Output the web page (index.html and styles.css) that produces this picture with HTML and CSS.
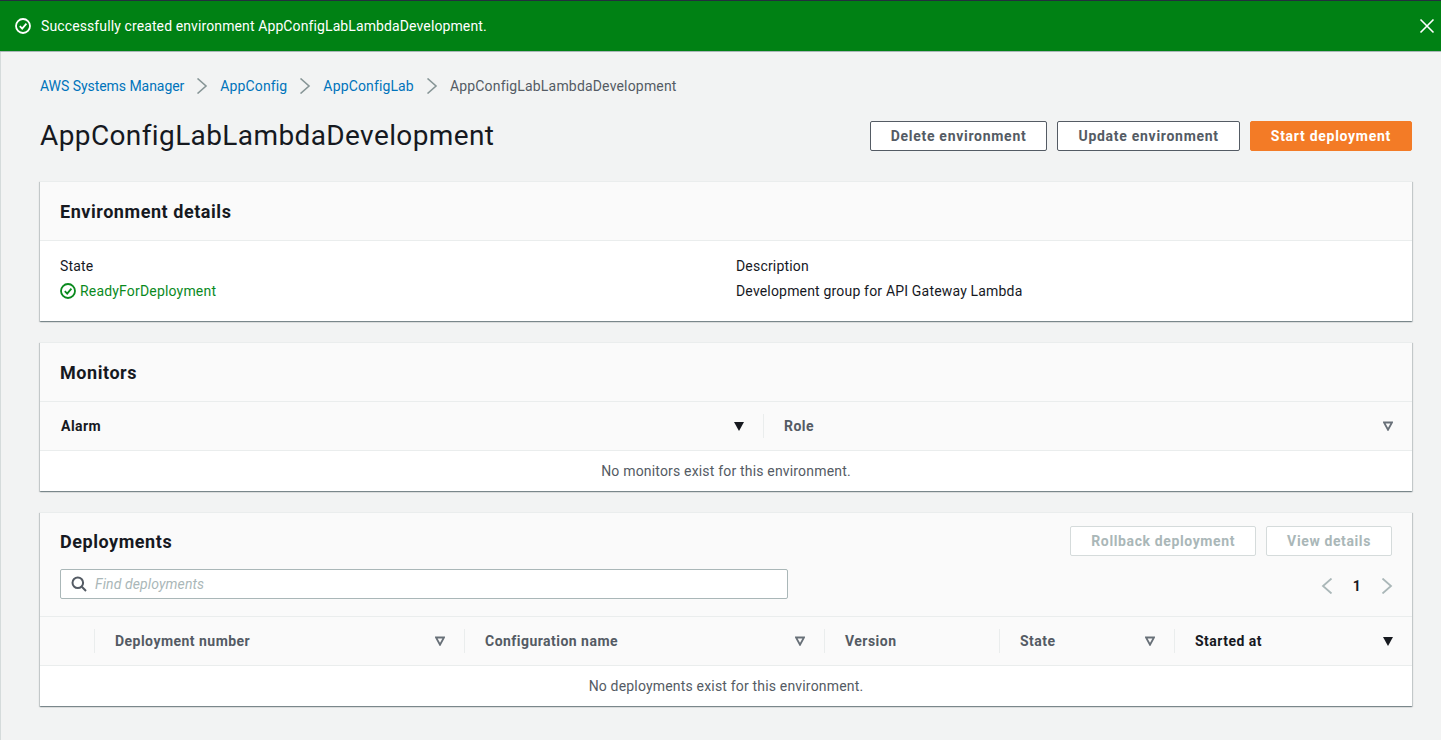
FILE: index.html
```html
<!DOCTYPE html>
<html lang="en">
<head>
  <meta charset="UTF-8" />
  <meta name="viewport" content="width=device-width,initial-scale=1.0" />
  <title>AppConfigLabLambdaDevelopment</title>
  <link rel="stylesheet" href="styles.css">
</head>
<body>
  <div class="flash">
    <svg class="flash-icon" viewBox="0 0 16 16" width="16" height="16"><circle cx="8" cy="8" r="7"/><path d="M4.8 8.2 7.2 10.6 11.4 5.6"/></svg>
    <span class="flash-text">Successfully created environment AppConfigLabLambdaDevelopment.</span>
    <svg class="flash-close" viewBox="0 0 16 16" width="16" height="16"><path d="M1.5 1.5 14.5 14.5M14.5 1.5 1.5 14.5"/></svg>
  </div>

  <main class="content">
    <nav class="crumbs">
      <a href="#">AWS Systems Manager</a>
      <svg class="chev" viewBox="0 0 16 16" width="16" height="16"><path d="M3.5 .5 12 8 3.5 15.5"/></svg>
      <a href="#">AppConfig</a>
      <svg class="chev" viewBox="0 0 16 16" width="16" height="16"><path d="M3.5 .5 12 8 3.5 15.5"/></svg>
      <a href="#">AppConfigLab</a>
      <svg class="chev" viewBox="0 0 16 16" width="16" height="16"><path d="M3.5 .5 12 8 3.5 15.5"/></svg>
      <span class="crumb-current">AppConfigLabLambdaDevelopment</span>
    </nav>

    <div class="page-head">
      <h1>AppConfigLabLambdaDevelopment</h1>
      <div class="actions">
        <button class="btn" type="button">Delete environment</button>
        <button class="btn" type="button">Update environment</button>
        <button class="btn btn-primary" type="button">Start deployment</button>
      </div>
    </div>

    <section class="card">
      <div class="card-head"><h2>Environment details</h2></div>
      <div class="details">
        <div>
          <div class="label">State</div>
          <div class="status">
            <svg viewBox="0 0 16 16" width="16" height="16"><circle cx="8" cy="8" r="7"/><path d="M4.8 8.2 7.2 10.6 11.4 5.6"/></svg>
            ReadyForDeployment
          </div>
        </div>
        <div>
          <div class="label">Description</div>
          <div>Development group for API Gateway Lambda</div>
        </div>
      </div>
    </section>

    <section class="card">
      <div class="card-head"><h2>Monitors</h2></div>
      <div class="thead monitors-cols">
        <div class="th th-active"><span class="alarm-label">Alarm</span><span class="sort-on"></span></div>
        <div class="th th-divided">Role<svg class="sort-off" viewBox="0 0 10 10" width="10" height="10"><path d="M1 1.5H9L5 8.8Z"/></svg></div>
      </div>
      <div class="empty">No monitors exist for this environment.</div>
    </section>

    <section class="card">
      <div class="card-head card-head-tools">
        <div class="tools-top">
          <h2>Deployments</h2>
          <div class="tools-btns">
            <button class="btn btn-disabled" type="button">Rollback deployment</button>
            <button class="btn btn-disabled" type="button">View details</button>
          </div>
        </div>
        <div class="tools-bottom">
          <label class="search">
            <svg viewBox="0 0 16 16" width="16" height="16"><circle cx="6.8" cy="6.8" r="5.3"/><path d="M10.8 10.8 15 15"/></svg>
            <input type="text" placeholder="Find deployments" />
          </label>
          <div class="pager">
            <svg viewBox="0 0 16 16" width="16" height="16"><path d="M12.5 .5 4 8 12.5 15.5"/></svg>
            <span class="page-num">1</span>
            <svg viewBox="0 0 16 16" width="16" height="16"><path d="M3.5 .5 12 8 3.5 15.5"/></svg>
          </div>
        </div>
      </div>
      <div class="thead deployments-cols">
        <div class="th"></div>
        <div class="th th-divided">Deployment number<svg class="sort-off" viewBox="0 0 10 10" width="10" height="10"><path d="M1 1.5H9L5 8.8Z"/></svg></div>
        <div class="th th-divided">Configuration name<svg class="sort-off" viewBox="0 0 10 10" width="10" height="10"><path d="M1 1.5H9L5 8.8Z"/></svg></div>
        <div class="th th-divided">Version</div>
        <div class="th th-divided">State<svg class="sort-off" viewBox="0 0 10 10" width="10" height="10"><path d="M1 1.5H9L5 8.8Z"/></svg></div>
        <div class="th th-divided th-active">Started at<span class="sort-on"></span></div>
      </div>
      <div class="empty">No deployments exist for this environment.</div>
    </section>
  </main>
</body>
</html>
```

FILE: styles.css
```css
* {
  box-sizing: border-box;
}

html, body {
  margin: 0;
  height: 100%;
}

body {
  background: #f2f3f3;
  color: #16191f;
  font-family: Roboto, "Noto Sans", Arial, sans-serif;
  font-size: 14px;
  line-height: 20px;
  letter-spacing: 0.18px;
  overflow: hidden;
}

.flash {
  height: 52px;
  background: #008114;
  border-top: 1px solid #232f3e;
  border-bottom: 1px solid #aab7b8;
  color: #fff;
  display: flex;
  align-items: center;
  padding: 0 6px 0 15px;
}

.flash-icon {
  fill: none;
  stroke: #fff;
  stroke-width: 1.8;
  margin-right: 10px;
}

.flash-text {
  flex: 1;
  letter-spacing: 0.11px;
}

.flash-close {
  fill: none;
  stroke: #fff;
  stroke-width: 1.6;
}

.content {
  border-left: 1px solid #d5dbdb;
  padding: 24px 29px 0 39px;
  height: 688px;
}

.crumbs {
  display: flex;
  align-items: center;
  height: 20px;
}

.crumbs a {
  color: #0073bb;
  text-decoration: none;
  letter-spacing: 0.14px;
}

.crumbs a:first-child {
  letter-spacing: -0.05px;
}

.chev {
  fill: none;
  stroke: #879596;
  stroke-width: 1.6;
  margin: 0 10px;
}

.crumb-current {
  color: #545b64;
}

.page-head {
  display: flex;
  justify-content: space-between;
  align-items: center;
  height: 30px;
  margin-top: 25px;
  margin-bottom: 30px;
}

h1 {
  margin: 0;
  font-size: 28px;
  line-height: 36px;
  font-weight: 400;
  letter-spacing: 0.39px;
}

.actions, .tools-btns {
  display: flex;
  gap: 10px;
}

.btn {
  height: 30px;
  padding: 0 20px;
  background: #fff;
  border: 1px solid #545b64;
  border-radius: 2px;
  color: #545b64;
  font-family: inherit;
  font-size: 14px;
  font-weight: 700;
  letter-spacing: 0.72px;
}

.btn-primary {
  background: #f37b26;
  border-color: #f37b26;
  color: #fff;
}

.btn-disabled {
  background: #fff;
  border-color: #d5dbdb;
  color: #aab7b8;
  letter-spacing: 0.62px;
}

.card {
  background: #fff;
  border-top: 1px solid #eaeded;
  box-shadow: 0 1px 1px 0 rgba(0, 28, 36, 0.3), 1px 1px 1px 0 rgba(0, 28, 36, 0.15), -1px 1px 1px 0 rgba(0, 28, 36, 0.15);
  margin-bottom: 21px;
}

.card-head {
  background: #fafafa;
  height: 59px;
  border-bottom: 1px solid #eaeded;
  padding: 1px 20px 0;
  display: flex;
  align-items: center;
}

h2 {
  margin: 0;
  font-size: 18px;
  line-height: 22px;
  font-weight: 700;
  letter-spacing: 0.55px;
}

.details {
  display: grid;
  grid-template-columns: 676px 1fr;
  height: 80px;
  padding: 15px 20px 0;
}

.details > div {
  display: flex;
  flex-direction: column;
  gap: 5px;
}

.status {
  display: flex;
  align-items: center;
  gap: 4px;
  color: #0a8a1e;
}

.status svg {
  fill: none;
  stroke: #0a8a1e;
  stroke-width: 1.8;
}

.thead {
  display: grid;
  height: 49px;
  background: #fafafa;
  border-bottom: 1px solid #eaeded;
  align-items: center;
}

.monitors-cols {
  grid-template-columns: 723px 1fr;
}

.deployments-cols {
  grid-template-columns: 54px 370px 360px 175px 175px 1fr;
}

.th {
  height: 24px;
  display: flex;
  align-items: center;
  justify-content: space-between;
  padding: 0 19px 0 20px;
  font-weight: 700;
  letter-spacing: 0.47px;
  color: #545b64;
}

.th-divided {
  border-left: 1px solid #eaeded;
}

.th-active {
  color: #16191f;
}

.alarm-label {
  margin-left: 1px;
}

.sort-off {
  fill: none;
  stroke: #687078;
  stroke-width: 1.8;
  flex-shrink: 0;
}

.sort-on {
  width: 0;
  height: 0;
  border-left: 5.5px solid transparent;
  border-right: 5.5px solid transparent;
  border-top: 9px solid #16191f;
}

.empty {
  height: 40px;
  display: flex;
  align-items: center;
  justify-content: center;
  color: #545b64;
}

.card-head-tools {
  height: 104px;
  display: block;
  padding-top: 13px;
}

.tools-top {
  display: flex;
  justify-content: space-between;
  align-items: center;
  height: 30px;
}

.tools-top h2 {
  padding-top: 1px;
}

.tools-bottom {
  display: flex;
  justify-content: space-between;
  align-items: center;
  margin-top: 13px;
}

.search {
  width: 728px;
  height: 30px;
  display: flex;
  align-items: center;
  gap: 8px;
  padding-left: 10px;
  background: #fff;
  border: 1px solid #aab7b8;
  border-radius: 2px;
}

.search svg {
  fill: none;
  stroke: #545b64;
  stroke-width: 2;
  flex-shrink: 0;
}

.search input {
  flex: 1;
  border: none;
  outline: none;
  background: none;
  padding: 0;
  font-family: inherit;
  font-size: 14px;
  letter-spacing: 0.12px;
}

.search input::placeholder {
  color: #aab7b8;
  font-style: italic;
}

.pager {
  display: flex;
  align-items: center;
  gap: 18px;
  margin-top: 4px;
  margin-right: -3px;
}

.pager svg {
  fill: none;
  stroke: #aab7b8;
  stroke-width: 1.8;
}

.page-num {
  font-weight: 700;
}
```
